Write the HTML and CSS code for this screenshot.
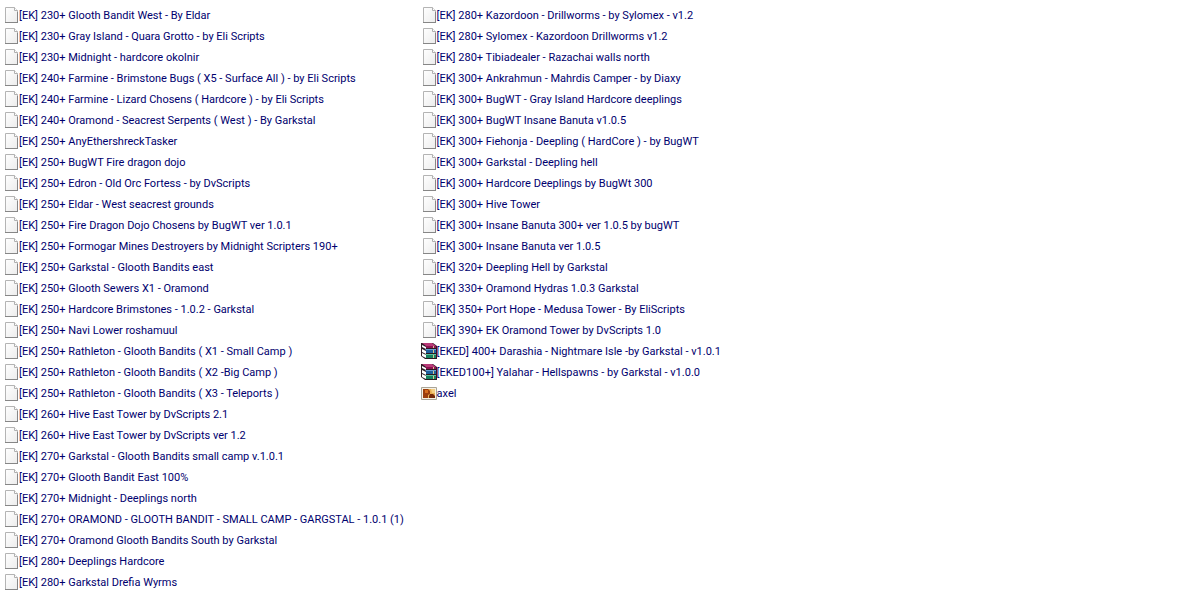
FILE: index.html
```html
<!DOCTYPE html>
<html lang="en">
<head>
    <meta charset="UTF-8">
    <meta name="viewport" content="width=device-width, initial-scale=1.0">
    <title>Scripts</title>
    <link rel="stylesheet" href="styles.css">
</head>
<body>
    <svg class="sprite" aria-hidden="true">
        <defs>
            <linearGradient id="paper" x1="0" y1="0" x2="1" y2="1">
                <stop offset="0" stop-color="#ffffff"/>
                <stop offset="1" stop-color="#ececec"/>
            </linearGradient>
        </defs>
        <symbol id="file" viewBox="0 0 16 16">
            <path d="M2.5 .5h9l3 3v12h-12z" fill="url(#paper)" stroke="#b4b4b4"/>
            <path d="M11.5 .5v3h3" fill="#fff" stroke="#b0b0b0"/>
            <path d="M2 15.5h13M14.5 5v11" fill="none" stroke="#868686"/>
        </symbol>
        <symbol id="archive" viewBox="0 0 16 16">
            <path d="M0 0h12l4 3v13H4L0 13z" fill="#2a1a22"/>
            <path d="M1 0h10l4 3H5z" fill="#b83a78"/>
            <path d="M5 3h10v2H5z" fill="#8c1250"/>
            <path d="M1 2l4 2v2L1 4z" fill="#fff"/>
            <path d="M4 6h11v1H5z" fill="#6aa0d4"/>
            <path d="M5 7h10v3H5z" fill="#1f5f9c"/>
            <path d="M1 6l4 2v3L1 9z" fill="#fff"/>
            <path d="M4 11h11v1H5z" fill="#5cc09a"/>
            <path d="M5 12h10v3H5z" fill="#168060"/>
            <path d="M1 10l4 2v3l-4-2z" fill="#fff"/>
            <path d="M12 3h1v2h-1zM12 7h1v3h-1zM12 12h1v3h-1z" fill="#d8c890"/>
        </symbol>
        <symbol id="image" viewBox="0 0 16 16">
            <path d="M.5 2.5h15v12H.5z" fill="#f6f1e6" stroke="#a9a496"/>
            <path d="M2 4h12v9H2z" fill="#e9ae52"/>
            <path d="M2 4h5l2 2v3l-2 1v3H2z" fill="#9c3d0c"/>
            <path d="M4 5h3v3H4z" fill="#d66b1c"/>
            <path d="M9 9h3l2 2v2H8v-2z" fill="#742807"/>
            <path d="M10 4h4v4h-3z" fill="#f5cf82"/>
        </symbol>
    </svg>

    <ul class="file-list">
        <li><a href="#"><svg class="icon"><use href="#file"/></svg>[EK] 230+ Glooth Bandit West - By Eldar</a></li>
        <li><a href="#"><svg class="icon"><use href="#file"/></svg>[EK] 230+ Gray Island - Quara Grotto - by Eli Scripts</a></li>
        <li><a href="#"><svg class="icon"><use href="#file"/></svg>[EK] 230+ Midnight - hardcore okolnir</a></li>
        <li><a href="#"><svg class="icon"><use href="#file"/></svg>[EK] 240+ Farmine - Brimstone Bugs ( X5 - Surface All ) - by Eli Scripts</a></li>
        <li><a href="#"><svg class="icon"><use href="#file"/></svg>[EK] 240+ Farmine - Lizard Chosens ( Hardcore ) - by Eli Scripts</a></li>
        <li><a href="#"><svg class="icon"><use href="#file"/></svg>[EK] 240+ Oramond - Seacrest Serpents ( West ) - By Garkstal</a></li>
        <li><a href="#"><svg class="icon"><use href="#file"/></svg>[EK] 250+ AnyEthershreckTasker</a></li>
        <li><a href="#"><svg class="icon"><use href="#file"/></svg>[EK] 250+ BugWT Fire dragon dojo</a></li>
        <li><a href="#"><svg class="icon"><use href="#file"/></svg>[EK] 250+ Edron - Old Orc Fortess - by DvScripts</a></li>
        <li><a href="#"><svg class="icon"><use href="#file"/></svg>[EK] 250+ Eldar - West seacrest grounds</a></li>
        <li><a href="#"><svg class="icon"><use href="#file"/></svg>[EK] 250+ Fire Dragon Dojo Chosens by BugWT ver 1.0.1</a></li>
        <li><a href="#"><svg class="icon"><use href="#file"/></svg>[EK] 250+ Formogar Mines Destroyers by Midnight Scripters 190+</a></li>
        <li><a href="#"><svg class="icon"><use href="#file"/></svg>[EK] 250+ Garkstal - Glooth Bandits east</a></li>
        <li><a href="#"><svg class="icon"><use href="#file"/></svg>[EK] 250+ Glooth Sewers X1 - Oramond</a></li>
        <li><a href="#"><svg class="icon"><use href="#file"/></svg>[EK] 250+ Hardcore Brimstones - 1.0.2 - Garkstal</a></li>
        <li><a href="#"><svg class="icon"><use href="#file"/></svg>[EK] 250+ Navi Lower roshamuul</a></li>
        <li><a href="#"><svg class="icon"><use href="#file"/></svg>[EK] 250+ Rathleton - Glooth Bandits ( X1 - Small Camp )</a></li>
        <li><a href="#"><svg class="icon"><use href="#file"/></svg>[EK] 250+ Rathleton - Glooth Bandits ( X2 -Big Camp )</a></li>
        <li><a href="#"><svg class="icon"><use href="#file"/></svg>[EK] 250+ Rathleton - Glooth Bandits ( X3 - Teleports )</a></li>
        <li><a href="#"><svg class="icon"><use href="#file"/></svg>[EK] 260+ Hive East Tower by DvScripts 2.1</a></li>
        <li><a href="#"><svg class="icon"><use href="#file"/></svg>[EK] 260+ Hive East Tower by DvScripts ver 1.2</a></li>
        <li><a href="#"><svg class="icon"><use href="#file"/></svg>[EK] 270+ Garkstal - Glooth Bandits small camp v.1.0.1</a></li>
        <li><a href="#"><svg class="icon"><use href="#file"/></svg>[EK] 270+ Glooth Bandit East 100%</a></li>
        <li><a href="#"><svg class="icon"><use href="#file"/></svg>[EK] 270+ Midnight - Deeplings north</a></li>
        <li><a href="#"><svg class="icon"><use href="#file"/></svg>[EK] 270+ ORAMOND - GLOOTH BANDIT - SMALL CAMP - GARGSTAL - 1.0.1 (1)</a></li>
        <li><a href="#"><svg class="icon"><use href="#file"/></svg>[EK] 270+ Oramond Glooth Bandits South by Garkstal</a></li>
        <li><a href="#"><svg class="icon"><use href="#file"/></svg>[EK] 280+ Deeplings Hardcore</a></li>
        <li><a href="#"><svg class="icon"><use href="#file"/></svg>[EK] 280+ Garkstal Drefia Wyrms</a></li>
        <li><a href="#"><svg class="icon"><use href="#file"/></svg>[EK] 280+ Kazordoon - Drillworms - by Sylomex - v1.2</a></li>
        <li><a href="#"><svg class="icon"><use href="#file"/></svg>[EK] 280+ Sylomex - Kazordoon Drillworms v1.2</a></li>
        <li><a href="#"><svg class="icon"><use href="#file"/></svg>[EK] 280+ Tibiadealer - Razachai walls north</a></li>
        <li><a href="#"><svg class="icon"><use href="#file"/></svg>[EK] 300+ Ankrahmun - Mahrdis Camper - by Diaxy</a></li>
        <li><a href="#"><svg class="icon"><use href="#file"/></svg>[EK] 300+ BugWT - Gray Island Hardcore deeplings</a></li>
        <li><a href="#"><svg class="icon"><use href="#file"/></svg>[EK] 300+ BugWT Insane Banuta v1.0.5</a></li>
        <li><a href="#"><svg class="icon"><use href="#file"/></svg>[EK] 300+ Fiehonja - Deepling ( HardCore ) - by BugWT</a></li>
        <li><a href="#"><svg class="icon"><use href="#file"/></svg>[EK] 300+ Garkstal - Deepling hell</a></li>
        <li><a href="#"><svg class="icon"><use href="#file"/></svg>[EK] 300+ Hardcore Deeplings by BugWt 300</a></li>
        <li><a href="#"><svg class="icon"><use href="#file"/></svg>[EK] 300+ Hive Tower</a></li>
        <li><a href="#"><svg class="icon"><use href="#file"/></svg>[EK] 300+ Insane Banuta 300+ ver 1.0.5 by bugWT</a></li>
        <li><a href="#"><svg class="icon"><use href="#file"/></svg>[EK] 300+ Insane Banuta ver 1.0.5</a></li>
        <li><a href="#"><svg class="icon"><use href="#file"/></svg>[EK] 320+ Deepling Hell by Garkstal</a></li>
        <li><a href="#"><svg class="icon"><use href="#file"/></svg>[EK] 330+ Oramond Hydras 1.0.3 Garkstal</a></li>
        <li><a href="#"><svg class="icon"><use href="#file"/></svg>[EK] 350+ Port Hope - Medusa Tower - By EliScripts</a></li>
        <li><a href="#"><svg class="icon"><use href="#file"/></svg>[EK] 390+ EK Oramond Tower by DvScripts 1.0</a></li>
        <li><a href="#"><svg class="icon"><use href="#archive"/></svg>[EKED] 400+ Darashia - Nightmare Isle -by Garkstal - v1.0.1</a></li>
        <li><a href="#"><svg class="icon"><use href="#archive"/></svg>[EKED100+] Yalahar - Hellspawns - by Garkstal - v1.0.0</a></li>
        <li><a href="#"><svg class="icon"><use href="#image"/></svg>axel</a></li>
    </ul>
</body>
</html>
```
FILE: styles.css
```css
:root {
    --text-color: #00006e;
    --background: #fff;
}

body {
    margin: 0;
    background-color: var(--background);
    color: var(--text-color);
    font-family: Tahoma, Roboto, sans-serif;
    font-size: 11px;
    line-height: 21px;
}

.sprite {
    position: absolute;
    width: 0;
    height: 0;
}

.file-list {
    display: grid;
    grid-auto-flow: column;
    grid-template-rows: repeat(28, 21px);
    grid-auto-columns: 35%;
    margin: 0;
    padding: 5px 0 5px 3px;
    list-style: none;
}

.file-list a {
    display: flex;
    align-items: center;
    color: inherit;
    text-decoration: none;
    white-space: nowrap;
}

.file-list a:hover {
    text-decoration: underline;
}

.icon {
    flex: none;
    width: 16px;
    height: 16px;
    margin-bottom: 1px;
}
```
